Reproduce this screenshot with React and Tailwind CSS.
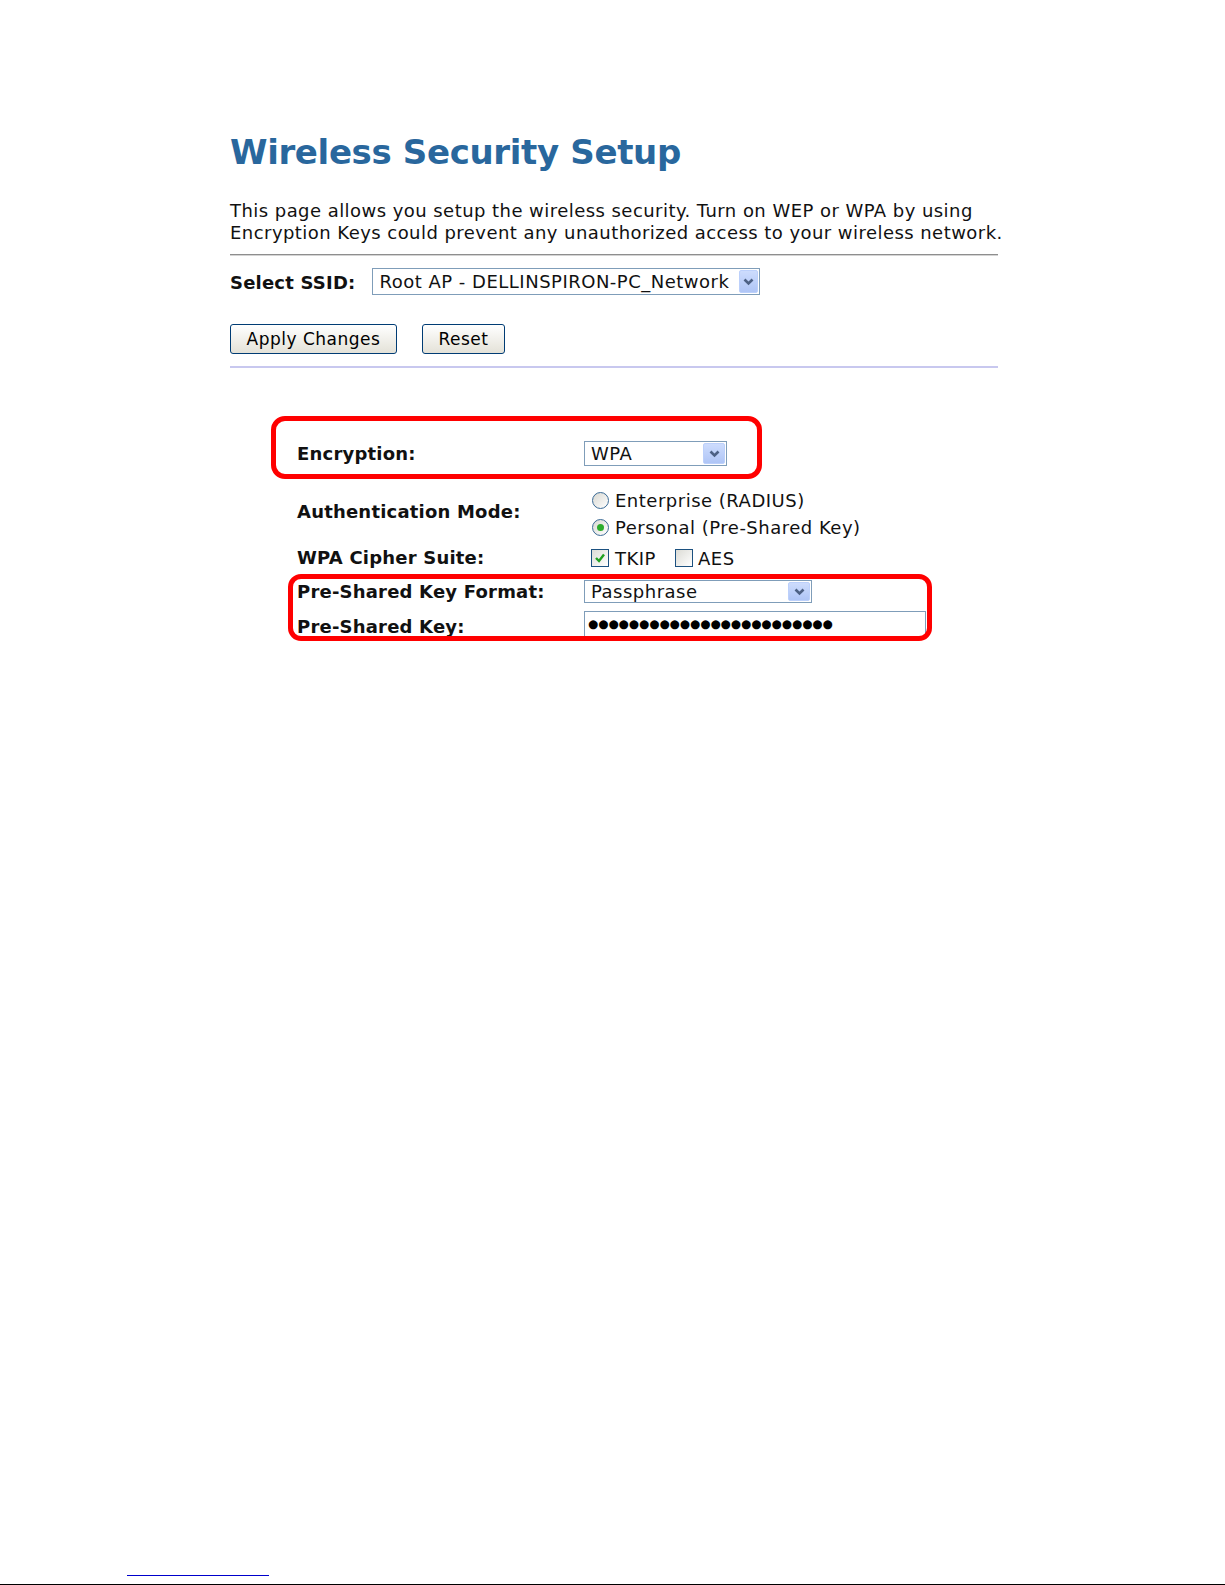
import React from 'react';

// Chevron drawn inside the XP-style dropdown button
const Chevron = () => (
  <svg width="11" height="8" viewBox="0 0 11 8">
    <path d="M1.5 1.5 L5.5 5.5 L9.5 1.5" fill="none" stroke="#4d6185" strokeWidth="2.6" />
  </svg>
);

const Select = ({ value, className, btn }) => (
  <div className={`flex items-stretch border border-[#7f9db9] bg-white p-px ${className}`}>
    <span className="flex-1 flex items-center pl-[5px] text-[18px] tracking-[0.5px] text-[#111] leading-none whitespace-nowrap">
      {value}
    </span>
    <span className={`${btn} flex items-center justify-center rounded-[2px] border border-[#bcd0fb] bg-linear-to-b from-[#cddcfd] to-[#afc5f6]`}>
      <Chevron />
    </span>
  </div>
);

const Radio = ({ checked }) => (
  <span className="w-[17px] h-[17px] rounded-full border border-[#3a6a95] bg-linear-to-br from-[#d8d8d2] to-white flex items-center justify-center">
    {checked && <span className="w-[7px] h-[7px] rounded-full bg-[#2bac2b]" />}
  </span>
);

const Checkbox = ({ checked }) => (
  <span className="w-[18px] h-[18px] border border-[#1c5180] bg-linear-to-br from-[#dcdcd6] to-white flex items-center justify-center">
    {checked && (
      <svg width="12" height="12" viewBox="0 0 12 12">
        <path d="M2 6 L5 9 L10 2.5" fill="none" stroke="#21a121" strokeWidth="2.4" />
      </svg>
    )}
  </span>
);

const Button = ({ children, className }) => (
  <button className={`h-[30px] rounded-[3px] border border-[#003c74] bg-linear-to-b from-white to-[#e4e2d8] text-[17px] tracking-[0.5px] text-black leading-none ${className}`}>
    {children}
  </button>
);

const Label = ({ children, className = '' }) => (
  <span className={`text-[18px] font-bold tracking-[0.2px] text-[#111] leading-[22px] ${className}`}>{children}</span>
);

const App = () => {
  return (
    <div className="h-[1585px] flex flex-col bg-white font-['DejaVu_Sans',sans-serif]">
      <div className="pl-[230px] w-[998px]">
        {/* Header */}
        <h1 className="pt-[134px] text-[34px] leading-[36px] font-bold tracking-[-0.35px] text-[#29679d]">
          Wireless Security Setup
        </h1>
        <p className="mt-[30px] text-[18px] leading-[21.5px] tracking-[0.45px] text-[#111] whitespace-nowrap">
          This page allows you setup the wireless security. Turn on WEP or WPA by using
          <br />
          Encryption Keys could prevent any unauthorized access to your wireless network.
        </p>

        <div className="mt-[11px] w-[768px]">
          <div className="h-px bg-[#8e8e8e]" />
          <div className="h-px bg-[#d4d4d4]" />
        </div>

        {/* SSID */}
        <div className="mt-[12px] flex items-center gap-[17px] h-[27px]">
          <Label className="pt-[3px]">Select SSID:</Label>
          <Select value="Root AP - DELLINSPIRON-PC_Network" className="w-[388px] h-[27px]" btn="w-[19px]" />
        </div>

        <div className="mt-[29px] flex gap-[25px]">
          <Button className="w-[167px]">Apply Changes</Button>
          <Button className="w-[83px]">Reset</Button>
        </div>

        <div className="mt-[12px] w-[768px] h-[2px] bg-[#c8c8ef]" />

        {/* Security form */}
        <div className="relative pt-[73px] pl-[67px]">
          <div className="grid grid-cols-[287px_1fr]">
            <div className="h-[25px] flex items-center">
              <Label>Encryption:</Label>
            </div>
            <div className="h-[25px]">
              <Select value="WPA" className="w-[143px] h-[25px]" btn="w-[22px]" />
            </div>

            <div className="mt-[21px] pt-[14px]">
              <Label>Authentication Mode:</Label>
            </div>
            <div className="mt-[21px] pl-[8px] text-[18px] tracking-[0.5px] text-[#111]">
              <div className="h-[27px] flex items-center gap-[6px]">
                <Radio />
                <span>Enterprise (RADIUS)</span>
              </div>
              <div className="h-[27px] flex items-center gap-[6px]">
                <Radio checked />
                <span>Personal (Pre-Shared Key)</span>
              </div>
            </div>

            <div className="mt-[6px] h-[22px] flex items-center">
              <Label>WPA Cipher Suite:</Label>
            </div>
            <div className="mt-[6px] h-[22px] pl-[7px] flex items-center text-[18px] tracking-[0.5px] text-[#111]">
              <Checkbox checked />
              <span className="ml-[6px]">TKIP</span>
              <span className="ml-[19px]"><Checkbox /></span>
              <span className="ml-[5px]">AES</span>
            </div>

            <div className="mt-[11px] h-[23px] flex items-center">
              <Label>Pre-Shared Key Format:</Label>
            </div>
            <div className="mt-[11px] h-[23px]">
              <Select value="Passphrase" className="w-[228px] h-[23px]" btn="w-[22px]" />
            </div>

            <div className="mt-[8px] h-[28px] flex items-center">
              <Label className="pt-[3px]">Pre-Shared Key:</Label>
            </div>
            <div className="mt-[8px] h-[28px] w-[342px] border border-[#7f9db9] bg-white flex items-center pl-[3px] text-[11.7px] text-black overflow-hidden whitespace-nowrap">
              ●●●●●●●●●●●●●●●●●●●●●●●●
            </div>
          </div>

          {/* Red annotation boxes */}
          <div className="absolute top-[48px] left-[41px] w-[491px] h-[63px] border-[5px] border-[#ff0000] rounded-[14px] pointer-events-none" />
          <div className="absolute top-[206px] left-[58px] w-[644px] h-[67px] border-[5px] border-[#ff0000] rounded-[13px] pointer-events-none" />
        </div>
      </div>

      {/* Footer rules */}
      <div className="mt-auto">
        <div className="ml-[127px] w-[142px] h-px bg-[#0000cc]" />
        <div className="mt-[8px] h-px bg-black" />
      </div>
    </div>
  );
};

export default App;
